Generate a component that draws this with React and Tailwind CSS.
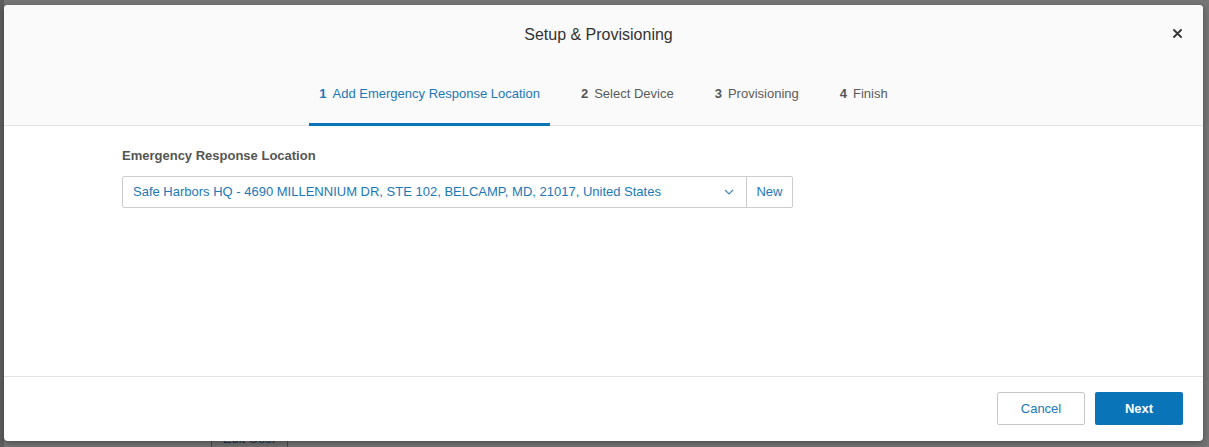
import React from "react";

export default function App() {
  const tabs = [
    { n: "1", label: "Add Emergency Response Location", active: true },
    { n: "2", label: "Select Device" },
    { n: "3", label: "Provisioning" },
    { n: "4", label: "Finish" },
  ];
  return (
    <div
      className="relative w-[1209px] h-[447px] overflow-hidden bg-[#757575]"
      style={{ fontFamily: '"Liberation Sans", Arial, sans-serif' }}
    >
      {/* underlying page (dimmed) */}
      <div className="absolute left-0 top-0 w-[4px] h-full bg-[#5e5e5e]" />
      <div className="absolute left-[211px] top-[424px] w-[77px] h-[30px] border border-[#4a4a4a] bg-[#707070] flex items-center justify-center text-[13px] text-[#1d3550]">
        Edit User
      </div>

      {/* modal */}
      <div className="absolute left-[4px] top-[5px] w-[1199px] h-[436px] bg-white rounded-[4px] shadow-[0_2px_6px_rgba(0,0,0,0.35)] flex flex-col overflow-hidden">
        {/* header */}
        <div className="bg-[#fafafa] border-b border-[#e2e2e2] flex flex-col">
          <div className="relative h-[58px] flex items-center justify-center pt-[2px] pr-[10px]">
            <span className="text-[16px] text-[#333333]">Setup &amp; Provisioning</span>
            <button className="absolute right-[21px] top-[23px] w-[10px] h-[10px] flex items-center justify-center">
              <svg width="9" height="9" viewBox="0 0 9 9">
                <path d="M1 1 L8 8 M8 1 L1 8" stroke="#333" strokeWidth="1.8" strokeLinecap="round" />
              </svg>
            </button>
          </div>
          <div className="flex justify-center gap-[21px] -mb-px">
            {tabs.map((t) => (
              <div
                key={t.n}
                className={
                  "h-[63px] px-[10px] pt-[2px] flex items-center border-b-[3px] text-[13px] " +
                  (t.active
                    ? "border-[#0a74b8] text-[#1c78b7]"
                    : "border-transparent text-[#5a5a5a]")
                }
              >
                <span className={"font-bold mr-[6px] " + (t.active ? "text-[#1c78b7]" : "text-[#555555]")}>
                  {t.n}
                </span>
                <span>{t.label}</span>
              </div>
            ))}
          </div>
        </div>

        {/* body */}
        <div className="flex-1 pl-[118px] pt-[21px]">
          <div className="text-[13px] font-bold text-[#555555] leading-[17px] mb-[12px]">
            Emergency Response Location
          </div>
          <div className="flex h-[32px]">
            <div className="w-[625px] border border-[#cccccc] rounded-l-[2px] flex items-center pl-[10px] pr-[12px] bg-white">
              <span className="flex-1 text-[13px] text-[#1c78b7] truncate">
                Safe Harbors HQ - 4690 MILLENNIUM DR, STE 102, BELCAMP, MD, 21017, United States
              </span>
              <svg width="10" height="6" viewBox="0 0 10 6" className="ml-2">
                <path d="M1 1 L5 5 L9 1" fill="none" stroke="#4a87b5" strokeWidth="1.2" />
              </svg>
            </div>
            <div className="w-[47px] -ml-px border border-[#cccccc] rounded-r-[2px] flex items-center justify-center text-[13px] text-[#1c78b7] bg-white">
              New
            </div>
          </div>
        </div>

        {/* footer */}
        <div className="h-[65px] border-t border-[#e2e2e2] flex justify-end items-start pt-[15px] pr-[20px] gap-[10px]">
          <button className="w-[88px] h-[33px] border border-[#c8c8c8] rounded-[2px] bg-white text-[13px] text-[#1c78b7]">
            Cancel
          </button>
          <button className="w-[88px] h-[33px] rounded-[2px] bg-[#0a74b8] text-[13px] font-bold text-white">
            Next
          </button>
        </div>
      </div>
    </div>
  );
}
